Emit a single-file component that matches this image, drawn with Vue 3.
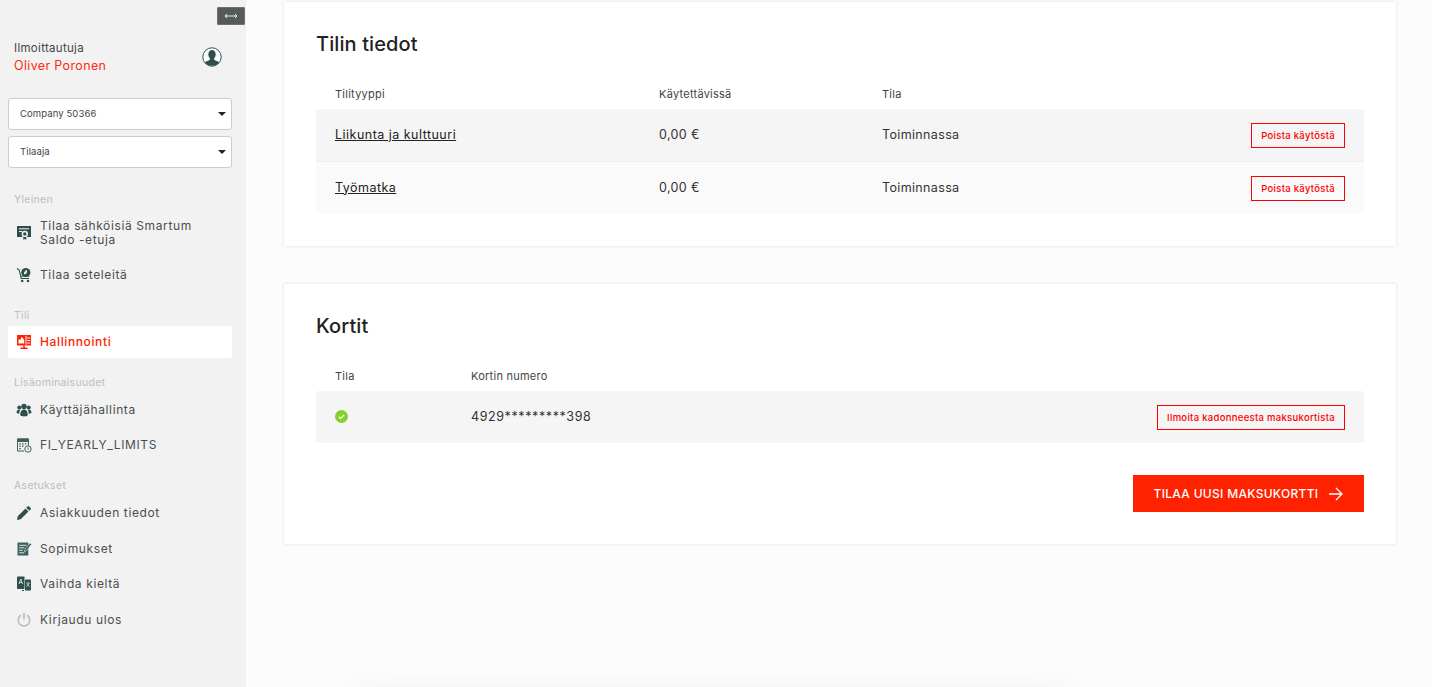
<script setup>
const groups = [
  { label: 'Yleinen', items: [
    { text: 'Tilaa sähköisiä Smartum Saldo -etuja', icon: 'card', tall: true },
    { text: 'Tilaa seteleitä', icon: 'cart' }
  ] },
  { label: 'Tili', wide: true, items: [{ text: 'Hallinnointi', icon: 'admin', active: true }] },
  { label: 'Lisäominaisuudet', items: [
    { text: 'Käyttäjähallinta', icon: 'users' },
    { text: 'FI_YEARLY_LIMITS', icon: 'calendar' }
  ] },
  { label: 'Asetukset', items: [
    { text: 'Asiakkuuden tiedot', icon: 'pencil' },
    { text: 'Sopimukset', icon: 'contract' },
    { text: 'Vaihda kieltä', icon: 'lang' },
    { text: 'Kirjaudu ulos', icon: 'power' }
  ] }
]
const accounts = [
  { name: 'Liikunta ja kulttuuri', amount: '0,00 €', state: 'Toiminnassa' },
  { name: 'Työmatka', amount: '0,00 €', state: 'Toiminnassa' }
]
</script>

<template>
  <div class="page">
    <aside class="side">
      <button class="toggle" aria-label="Laajenna">
        <svg width="14" height="6" viewBox="0 0 14 6"><path d="M1 3h12M3 1 1 3l2 2M11 1l2 2-2 2" fill="none" stroke="#fff" stroke-width=".9"/></svg>
      </button>
      <div class="profile">
        <div>
          <div class="role">Ilmoittautuja</div>
          <div class="person">Oliver Poronen</div>
        </div>
        <svg class="avatar" width="20" height="20" viewBox="0 0 20 20">
          <defs><clipPath id="av"><circle cx="10" cy="10" r="8.800"/></clipPath></defs>
          <circle cx="10" cy="10" r="9.200" fill="#fff" stroke="#2f4f4a" stroke-width="1"/>
          <g clip-path="url(#av)" fill="#2f4f4a">
            <ellipse cx="10" cy="7.600" rx="3.700" ry="4.600"/>
            <path d="M8 11h4l.4 2 4.600 2v5H3v-5l4.600-2z"/>
          </g>
        </svg>
      </div>
      <div class="sel">Company 50366<i></i></div>
      <div class="sel second">Tilaaja<i></i></div>

      <nav class="nav">
        <section v-for="g in groups" :key="g.label" class="group" :class="{ wide: g.wide }">
          <div class="group-label">{{ g.label }}</div>
          <a v-for="it in g.items" :key="it.text" class="item" :class="{ active: it.active, tall: it.tall }">
            <svg class="ico" width="16" height="16" viewBox="0 0 16 16">
              <g v-if="it.icon === 'card'">
                <path d="M1 1h14v11H1z" fill="#2f4f4a"/>
                <path d="M3 3.800h10M3 6.500h3" stroke="#f2f2f2" stroke-width="1"/>
                <circle cx="8.800" cy="9" r="3.200" fill="#f2f2f2"/>
                <circle cx="8.800" cy="9" r="1.700" fill="#2f4f4a"/>
                <path d="M7.300 12h3v2.800l-1.500-.8-1.500.8z" fill="#2f4f4a"/>
              </g>
              <g v-else-if="it.icon === 'cart'" fill="#2f4f4a">
                <path d="M1 1.500l2.200 1.500 2 8.500h7.800" fill="none" stroke="#2f4f4a" stroke-width="1.100"/>
                <circle cx="9.800" cy="5.500" r="4.600"/>
                <path d="M7.800 7.500c0-2.300 1-3.800 3.400-4.800-.5 1 .2 1.800-.6 3.300-.6 1-1.600 1.300-2.800 1.500z" fill="#f2f2f2"/>
                <path d="M5.200 9.200h8" stroke="#2f4f4a" stroke-width="1"/>
                <circle cx="6.200" cy="14" r="1.300"/><circle cx="12" cy="14" r="1.300"/>
              </g>
              <g v-else-if="it.icon === 'admin'">
                <path d="M1 1h14v10.500H1z" fill="#ff2200"/>
                <path d="M4.500 14.300h7M8 11.500v2.800" stroke="#ff2200" stroke-width="1.500"/>
                <path d="M10 1.800v9" stroke="#f7f7f7" stroke-width="1"/>
                <path d="M11.200 4h3M11.200 6.500h3M11.200 9h3" stroke="#f7f7f7" stroke-width="1.100"/>
                <path d="M2.500 5.500h2.500V3l1.200.6 2 1.900-1.600.5h1.600v3.500H2.500z" fill="#f7f7f7"/>
              </g>
              <g v-else-if="it.icon === 'users'" fill="#2f4f4a">
                <circle cx="8" cy="4.500" r="2.700"/><circle cx="3.300" cy="5.500" r="2"/><circle cx="12.700" cy="5.500" r="2"/>
                <path d="M4.300 13.500c-.3-4 1-6 3.700-6s4 2 3.700 6c-1.500 1.200-5.900 1.200-7.400 0z"/>
                <path d="M.6 11c-.2-2.300.8-3.500 2.700-3.500l1 .6c-.9 1-1.100 2-1.100 3.900zM15.400 11c.2-2.300-.8-3.500-2.700-3.500l-1 .6c.9 1 1.100 2 1.100 3.900z"/>
              </g>
              <g v-else-if="it.icon === 'calendar'" fill="none" stroke="#3f5f5a">
                <path d="M1.500 2h11v6.500M1.500 2v12h6.500" stroke-width="1"/>
                <path d="M1.500 2h11v2.500h-11z" fill="#3f5f5a"/>
                <path d="M3.200 6.800h1.600M6 6.800h1.600M8.800 6.800h1.600M3.200 9.200h1.600M6 9.200h1.600M3.200 11.600h1.600" stroke-width="1.200"/>
                <circle cx="12" cy="12" r="3.200" fill="#f2f2f2" stroke-width="1"/>
                <path d="M12 10.300V12l1 .8" stroke-width=".8"/>
              </g>
              <g v-else-if="it.icon === 'pencil'" fill="#2f4f4a">
                <path d="M1 15l.7-3.700 7.800-7.700 3 3-7.800 7.700zM10.300 2.800l1.500-1.500a.8.800 0 0 1 1.100 0l1.900 1.900a.8.800 0 0 1 0 1.100l-1.500 1.500z"/>
              </g>
              <g v-else-if="it.icon === 'contract'">
                <path d="M1.500 1.500h10.800v13H1.500z" fill="#3f5f5a"/>
                <path d="M3.200 4.300h7.300M3.200 6.800h5.300M3.200 9.300h3.500M3.200 11.800h5" stroke="#f2f2f2" stroke-width=".9"/>
                <path d="M8.500 11l.5-2.800 4.800-6.200 1.700 1.300-4.800 6.200z" fill="#3f5f5a" stroke="#f2f2f2" stroke-width=".5"/>
              </g>
              <g v-else-if="it.icon === 'lang'">
                <rect x="1" y=".5" width="7.500" height="12.500" rx=".8" fill="#2f4f4a"/>
                <rect x="9" y="3.500" width="6" height="11" rx=".8" fill="#2f4f4a"/>
                <path d="M3 8l1.800-5L6.600 8M3.600 6.500h2.400" fill="none" stroke="#f2f2f2" stroke-width=".8"/>
                <path d="M10.300 7h3.400M13 7c-.5 2-1.500 3-2.700 3.500M11 8c.5 1 1.500 2 2.700 2.500" fill="none" stroke="#f2f2f2" stroke-width=".7"/>
                <path d="M6 14.500h2" stroke="#2f4f4a" stroke-width="1"/>
              </g>
              <g v-else fill="none" stroke="#bdbdbd" stroke-width="1.700">
                <path d="M4.800 3.300a5.800 5.800 0 1 0 6.400 0"/><path d="M8 1v6.500"/>
              </g>
            </svg>
            <span>{{ it.text }}</span>
          </a>
        </section>
      </nav>
    </aside>

    <main class="main">
      <section class="card first">
        <h2>Tilin tiedot</h2>
        <div class="row-head accounts">
          <span>Tilityyppi</span><span>Käytettävissä</span><span>Tila</span>
        </div>
        <div class="rows">
          <div v-for="a in accounts" :key="a.name" class="row accounts">
            <a class="link">{{ a.name }}</a>
            <span>{{ a.amount }}</span>
            <span>{{ a.state }}</span>
            <button class="outline">Poista käytöstä</button>
          </div>
        </div>
      </section>

      <section class="card">
        <h2>Kortit</h2>
        <div class="row-head cards">
          <span>Tila</span><span>Kortin numero</span>
        </div>
        <div class="rows">
          <div class="row cards">
            <svg width="13" height="13" viewBox="0 0 13 13">
              <circle cx="6.500" cy="6.500" r="6.500" fill="#84d12e"/>
              <path d="M3.800 6.700l1.900 1.800 3.500-3.600" fill="none" stroke="#fff" stroke-width="1.200"/>
            </svg>
            <span class="num">4929*********398</span>
            <button class="outline">Ilmoita kadonneesta maksukortista</button>
          </div>
        </div>
        <div class="actions">
          <button class="primary">
            <span>TILAA UUSI MAKSUKORTTI</span>
            <svg width="14" height="14" viewBox="0 0 14 14"><path d="M0 7h13M7 1l6 6-6 6" fill="none" stroke="#fff" stroke-width="1.300"/></svg>
          </button>
        </div>
      </section>
      <div class="next"></div>
    </main>
  </div>
</template>

<style>
html, body { margin: 0; overflow: hidden; background: #fcfcfc; }
</style>

<style scoped>
.page {
  display: flex;
  width: 1432px;
  height: 687px;
  overflow: hidden;
  font-family: Inter, "Open Sans", sans-serif;
  color: #333;
  background: #fcfcfc;
}
.side {
  position: relative;
  flex: 0 0 246px;
  box-sizing: border-box;
  padding: 39px 14px 0 8px;
  background: #f2f2f2;
}
.toggle {
  position: absolute;
  top: 7px;
  left: 217px;
  width: 28px;
  height: 18px;
  padding: 0;
  display: flex;
  align-items: center;
  justify-content: center;
  background: #545b59;
  border: 1px solid #6c7270;
  border-radius: 1px;
}
.profile {
  display: flex;
  justify-content: space-between;
  align-items: center;
  height: 36px;
  padding: 0 10px 0 6px;
}
.role { font-size: 11.500px; line-height: 18px; letter-spacing: .3px; color: #444; }
.person { font-size: 12.500px; line-height: 18px; letter-spacing: .35px; color: #ff2a12; }
.sel {
  position: relative;
  display: flex;
  align-items: center;
  box-sizing: border-box;
  height: 32px;
  margin-top: 23px;
  padding: 0 0 2px 11px;
  background: #fff;
  border: 1px solid #ccc;
  border-radius: 3px;
  font-size: 9.500px;
  letter-spacing: .1px;
  color: #444;
}
.sel.second { margin-top: 6px; }
.sel i {
  position: absolute;
  right: 5px;
  top: 13px;
  border: 4px solid transparent;
  border-top: 4px solid #222;
  border-bottom: 0;
}
.nav { margin-top: 25px; }
.group { margin-bottom: 16px; }
.group.wide { margin-bottom: 18.500px; }
.group-label {
  margin-bottom: 2px;
  padding-left: 6px;
  font-size: 10.500px;
  line-height: 14px;
  letter-spacing: .3px;
  color: #bdbdbd;
}
.item {
  display: flex;
  align-items: center;
  gap: 8px;
  height: 35.600px;
  padding-left: 8px;
  font-size: 12px;
  line-height: 14px;
  letter-spacing: .62px;
  color: #4a4f4e;
}
.item.tall { height: 48px; }
.item.tall span { width: 175px; }
.item.active {
  height: 32px;
  margin-top: 3px;
  border-radius: 3px;
  background: #fff;
  color: #ff2200;
  font-weight: 500;
}
.ico { flex: none; }
.main { flex: 1; padding: 2px 36px 0 38px; min-width: 0; }
.card {
  box-sizing: border-box;
  height: 260px;
  margin-top: 38px;
  padding: 30px 32px 0;
  background: #fff;
  box-shadow: 0 0 3px rgba(0,0,0,.12);
}
.card.first { height: 244px; margin-top: 0; }
h2 {
  margin: 0 0 31px;
  font-size: 20px;
  line-height: 24px;
  font-weight: 500;
  color: #222;
  letter-spacing: .1px;
}
.row-head {
  font-size: 11px;
  line-height: 14px;
  letter-spacing: .25px;
  color: #444;
  padding-bottom: 8px;
}
.accounts { display: grid; grid-template-columns: 324px 223px 1fr auto; padding-left: 19px; align-items: center; }
.cards { display: grid; grid-template-columns: 136px 1fr auto; padding-left: 19px; align-items: center; }
.rows { border-radius: 3px; overflow: hidden; }
.row {
  height: 52px;
  box-sizing: border-box;
  padding-right: 19px;
  padding-bottom: 2px;
  background: #f5f5f5;
  font-size: 12.500px;
  letter-spacing: .35px;
  color: #333;
}
.row + .row { background: #fafafa; border-top: 1px solid #eee; height: 53px; }
.link { text-decoration: underline; color: #222; letter-spacing: .48px; }
.num { letter-spacing: .6px; }
.outline {
  box-sizing: border-box;
  height: 25px;
  margin-top: 3px;
  padding: 0 9px;
  background: transparent;
  border: 1px solid #f00;
  font: 500 9.500px Inter, sans-serif;
  letter-spacing: .3px;
  color: #f00;
}
.actions { display: flex; justify-content: flex-end; margin-top: 32px; }
.primary {
  display: flex;
  align-items: center;
  justify-content: center;
  gap: 11px;
  width: 231px;
  height: 37px;
  padding: 0;
  border: 0;
  background: #ff2200;
  color: #fff;
  font: 500 12px Inter, sans-serif;
  letter-spacing: .3px;
}
.next {
  height: 200px;
  margin: 146px 326px 0 71px;
  box-shadow: 0 0 30px rgba(0,0,0,.05);
}
</style>
